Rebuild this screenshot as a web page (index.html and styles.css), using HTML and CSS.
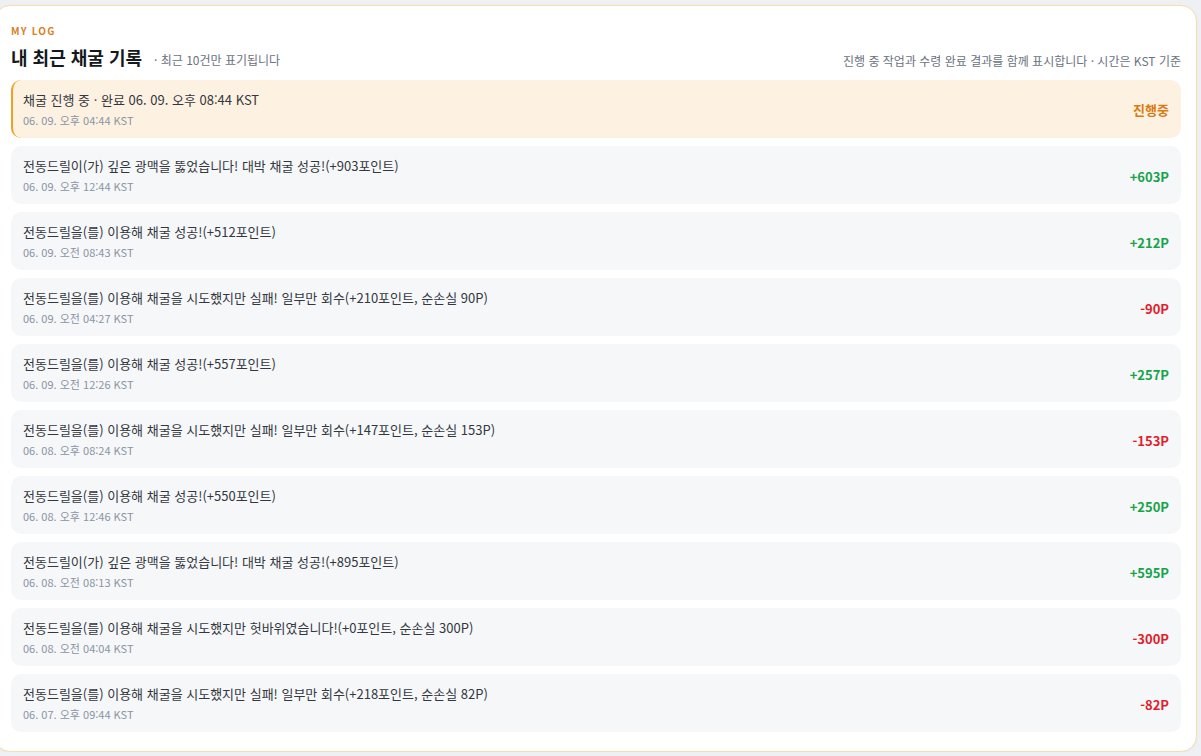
FILE: index.html
```html
<!DOCTYPE html>
<html lang="ko">
<head>
    <meta charset="UTF-8">
    <title>내 최근 채굴 기록</title>
    <link rel="stylesheet" href="styles.css">
</head>
<body>
<!-- 채굴 기록 카드 -->
<section class="log-card">
    <p class="eyebrow">MY LOG</p>
    <header class="log-header">
        <div class="log-title">
            <h2>내 최근 채굴 기록</h2>
            <span class="sub">· 최근 10건만 표기됩니다</span>
        </div>
        <p class="log-note">진행 중 작업과 수령 완료 결과를 함께 표시합니다 · 시간은 KST 기준</p>
    </header>

    <ul class="log-list">
        <li class="log-item running">
            <div class="item-body">
                <p class="item-text">채굴 진행 중 · 완료 06. 09. 오후 08:44 KST</p>
                <p class="item-time">06. 09. 오후 04:44 KST</p>
            </div>
            <span class="item-value pending">진행중</span>
        </li>
        <li class="log-item">
            <div class="item-body">
                <p class="item-text">전동드릴이(가) 깊은 광맥을 뚫었습니다! 대박 채굴 성공!(+903포인트)</p>
                <p class="item-time">06. 09. 오후 12:44 KST</p>
            </div>
            <span class="item-value plus">+603P</span>
        </li>
        <li class="log-item">
            <div class="item-body">
                <p class="item-text">전동드릴을(를) 이용해 채굴 성공!(+512포인트)</p>
                <p class="item-time">06. 09. 오전 08:43 KST</p>
            </div>
            <span class="item-value plus">+212P</span>
        </li>
        <li class="log-item">
            <div class="item-body">
                <p class="item-text">전동드릴을(를) 이용해 채굴을 시도했지만 실패! 일부만 회수(+210포인트, 순손실 90P)</p>
                <p class="item-time">06. 09. 오전 04:27 KST</p>
            </div>
            <span class="item-value minus">-90P</span>
        </li>
        <li class="log-item">
            <div class="item-body">
                <p class="item-text">전동드릴을(를) 이용해 채굴 성공!(+557포인트)</p>
                <p class="item-time">06. 09. 오전 12:26 KST</p>
            </div>
            <span class="item-value plus">+257P</span>
        </li>
        <li class="log-item">
            <div class="item-body">
                <p class="item-text">전동드릴을(를) 이용해 채굴을 시도했지만 실패! 일부만 회수(+147포인트, 순손실 153P)</p>
                <p class="item-time">06. 08. 오후 08:24 KST</p>
            </div>
            <span class="item-value minus">-153P</span>
        </li>
        <li class="log-item">
            <div class="item-body">
                <p class="item-text">전동드릴을(를) 이용해 채굴 성공!(+550포인트)</p>
                <p class="item-time">06. 08. 오후 12:46 KST</p>
            </div>
            <span class="item-value plus">+250P</span>
        </li>
        <li class="log-item">
            <div class="item-body">
                <p class="item-text">전동드릴이(가) 깊은 광맥을 뚫었습니다! 대박 채굴 성공!(+895포인트)</p>
                <p class="item-time">06. 08. 오전 08:13 KST</p>
            </div>
            <span class="item-value plus">+595P</span>
        </li>
        <li class="log-item">
            <div class="item-body">
                <p class="item-text">전동드릴을(를) 이용해 채굴을 시도했지만 헛바위였습니다!(+0포인트, 순손실 300P)</p>
                <p class="item-time">06. 08. 오전 04:04 KST</p>
            </div>
            <span class="item-value minus">-300P</span>
        </li>
        <li class="log-item">
            <div class="item-body">
                <p class="item-text">전동드릴을(를) 이용해 채굴을 시도했지만 실패! 일부만 회수(+218포인트, 순손실 82P)</p>
                <p class="item-time">06. 07. 오후 09:44 KST</p>
            </div>
            <span class="item-value minus">-82P</span>
        </li>
    </ul>
</section>
<!-- 채굴 기록 카드 끝 -->
</body>
</html>
```

FILE: styles.css
```css
* {
    box-sizing: border-box;
}
body {
    margin: 0;
    background: #eef0f3;
    font-family: "Noto Sans CJK KR", "Noto Sans", sans-serif;
    color: #2b2f36;
}
.log-card {
    margin: 5px 4px 0 -6px;
    padding: 18px 15px 19px 16px;
    background: #ffffff;
    border: 1px solid #f8dcae;
    border-radius: 16px;
    box-shadow: 0 1px 3px rgba(0, 0, 0, 0.04);
}
.eyebrow {
    margin: 0 0 6px;
    font-size: 10px;
    line-height: 14px;
    font-weight: 700;
    letter-spacing: 1.2px;
    color: #d9801f;
}
.log-header {
    display: flex;
    justify-content: space-between;
    align-items: flex-end;
    margin-bottom: 10px;
}
.log-title {
    display: flex;
    align-items: baseline;
    gap: 12px;
}
.log-title h2 {
    margin: 0;
    font-size: 18px;
    line-height: 26px;
    font-weight: 700;
    color: #15181d;
}
.log-title .sub {
    font-size: 12px;
    color: #6b7280;
}
.log-note {
    margin: 0;
    font-size: 12px;
    line-height: 18px;
    color: #6b7280;
}
.log-list {
    list-style: none;
    margin: 0;
    padding: 0;
    display: flex;
    flex-direction: column;
    gap: 8px;
}
.log-item {
    display: flex;
    align-items: center;
    justify-content: space-between;
    height: 58px;
    padding: 0 12px;
    background: #f6f7f9;
    border-radius: 10px;
}
.log-item.running {
    background: #fdf2e2;
    border-left: 2px solid #f0a020;
    padding-left: 10px;
}
.item-body p {
    margin: 0;
}
.item-text {
    font-size: 13px;
    line-height: 18px;
    color: #33373e;
}
.item-time {
    margin-top: 4px !important;
    font-size: 11px;
    line-height: 15px;
    color: #8a94a3;
}
.item-value {
    font-size: 13px;
    font-weight: 700;
    padding-top: 2px;
}
.item-value.pending {
    color: #d97a14;
    padding-top: 0;
}
.item-value.plus {
    color: #16a34a;
}
.item-value.minus {
    color: #e11d2e;
}
```
